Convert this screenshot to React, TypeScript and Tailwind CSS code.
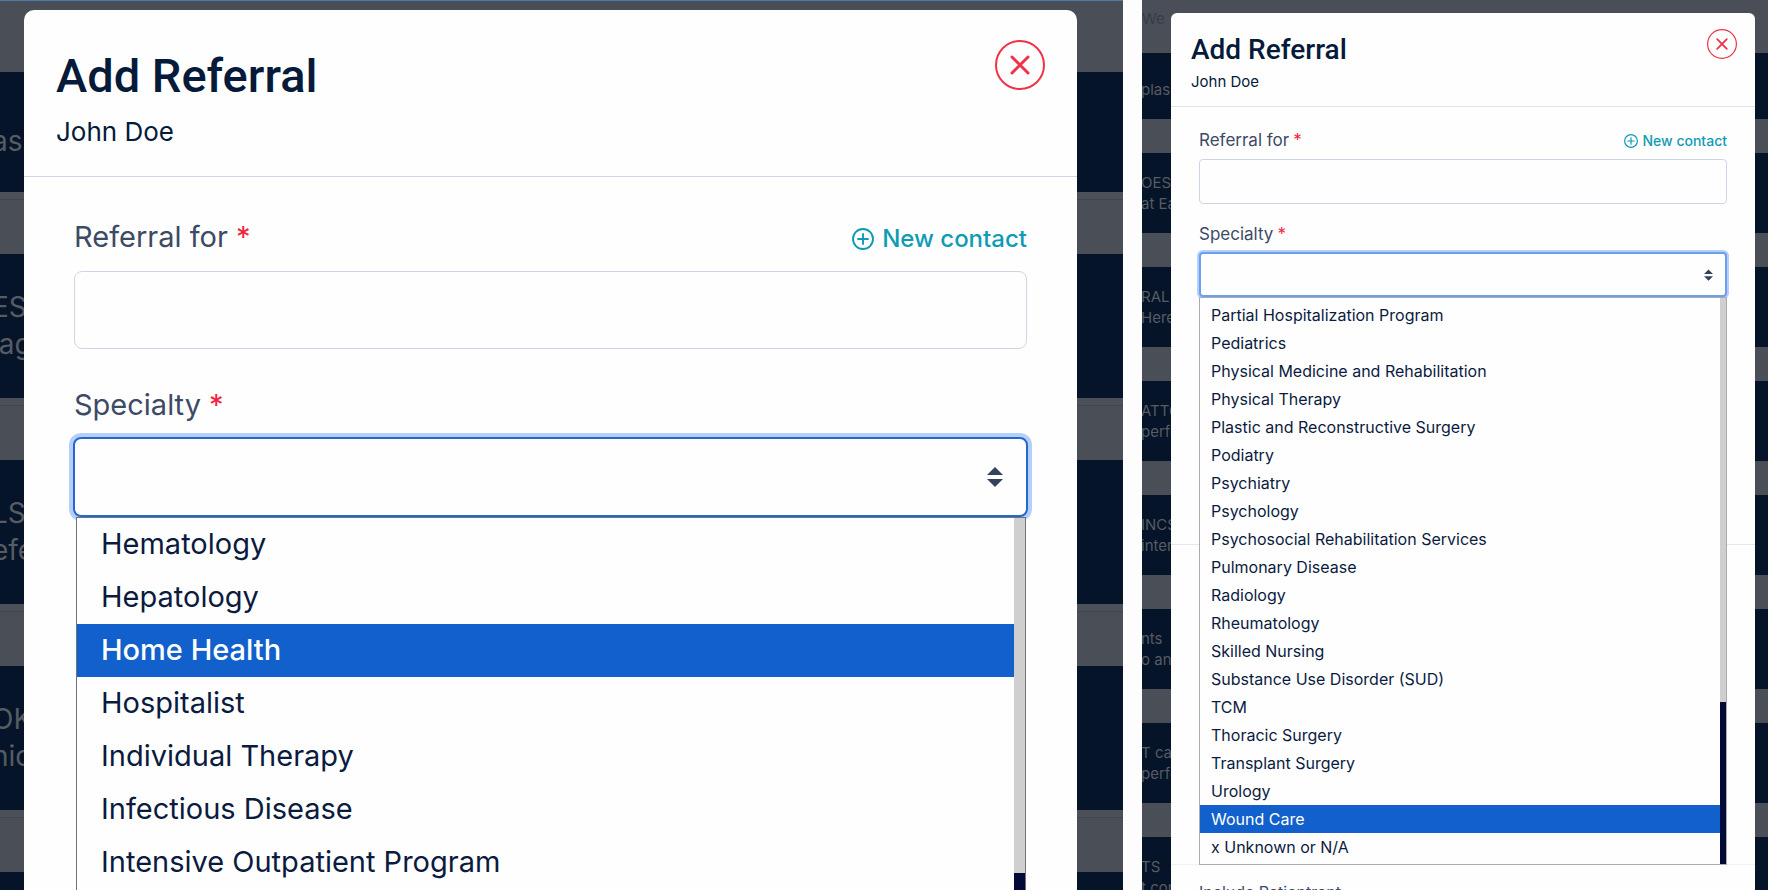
import clsx from "clsx";

type Size = "lg" | "sm";

type Stripe = {
  className: string;
  lines?: string[];
};

const leftStripes: Stripe[] = [
  { className: "h-[120px] pt-[18px]", lines: ["ass"] },
  { className: "h-[144px]", lines: ["ES", "iag"] },
  { className: "h-[144px]", lines: ["LS", "efe"] },
  { className: "h-[144px]", lines: ["OK", "hic"] },
  { className: "h-[144px]" },
];

const rightStripes: Stripe[] = [
  { className: "h-[66px] pt-[6px]", lines: ["plase"] },
  { className: "h-[80px]", lines: ["OES", "at Ea"] },
  { className: "h-[80px]", lines: ["RAL", "Here"] },
  { className: "h-[80px]", lines: ["ATT6", "perfe"] },
  { className: "h-[80px]", lines: ["INCS", "inter"] },
  { className: "h-[80px]", lines: ["nts", "o ant"] },
  { className: "h-[80px]", lines: ["T ca", "perfe"] },
  { className: "h-[80px]", lines: ["TS", "t con"] },
];

const leftOptions = [
  "Hematology",
  "Hepatology",
  "Home Health",
  "Hospitalist",
  "Individual Therapy",
  "Infectious Disease",
  "Intensive Outpatient Program",
];

const rightOptions = [
  "Partial Hospitalization Program",
  "Pediatrics",
  "Physical Medicine and Rehabilitation",
  "Physical Therapy",
  "Plastic and Reconstructive Surgery",
  "Podiatry",
  "Psychiatry",
  "Psychology",
  "Psychosocial Rehabilitation Services",
  "Pulmonary Disease",
  "Radiology",
  "Rheumatology",
  "Skilled Nursing",
  "Substance Use Disorder (SUD)",
  "TCM",
  "Thoracic Surgery",
  "Transplant Surgery",
  "Urology",
  "Wound Care",
  "x Unknown or N/A",
];

type BackdropProps = {
  size: Size;
  stripes: Stripe[];
  heading?: string;
};

function Backdrop({ size, stripes, heading }: BackdropProps) {
  const lg = size === "lg";
  return (
    <div
      aria-hidden="true"
      className={clsx(
        "absolute inset-0 flex flex-col overflow-hidden bg-[#4a4e57] text-[#565b64]",
        lg ? "text-[28px] leading-[37px]" : "text-[15px] leading-[21px]"
      )}
    >
      <div className={clsx("shrink-0 text-[#363c48]", lg ? "h-[71px]" : "h-[53px] pt-2")}>
        {heading}
      </div>
      <div className={clsx("flex flex-col", lg ? "gap-[62px]" : "gap-[34px]")}>
        {stripes.map(({ className, lines }, i) => (
          <div
            key={i}
            className={clsx(
              "flex shrink-0 flex-col justify-center bg-[#051428]",
              lg && "shadow-[0_7px_0_#4c5059,0_8px_0_#40454f]",
              className
            )}
          >
            {lines?.map((line) => (
              <p key={line} className={clsx("whitespace-nowrap", lg ? "-ml-2" : "-ml-px")}>
                {line}
              </p>
            ))}
          </div>
        ))}
      </div>
    </div>
  );
}

function CloseIcon({ size }: { size: Size }) {
  return (
    <svg
      viewBox="0 0 50 50"
      fill="none"
      stroke="currentColor"
      strokeLinecap="round"
      className={size === "lg" ? "size-[50px]" : "size-[30px]"}
    >
      <circle cx="25" cy="25" r="24" strokeWidth="2" />
      <path d="M17 17l16 16M33 17L17 33" strokeWidth="3" />
    </svg>
  );
}

function PlusIcon({ size }: { size: Size }) {
  return (
    <svg
      viewBox="0 0 22 22"
      fill="none"
      stroke="currentColor"
      strokeWidth="1.9"
      strokeLinecap="round"
      className={size === "lg" ? "size-[22px]" : "size-[14px]"}
    >
      <circle cx="11" cy="11" r="10" />
      <path d="M11 6v10M6 11h10" />
    </svg>
  );
}

function SortIcon({ size }: { size: Size }) {
  return (
    <svg
      viewBox="0 0 16 20"
      fill="currentColor"
      className={clsx(
        "pointer-events-none absolute inset-y-0 my-auto text-[#33425f]",
        size === "lg" ? "right-[25px] h-5 w-4" : "right-[14px] h-3 w-[9px]"
      )}
    >
      <path d="M8 0l8 8H0zM8 20l8-8H0z" />
    </svg>
  );
}

function Required() {
  return <span className="text-[#f0253f]">*</span>;
}

type ListProps = {
  size: Size;
  options: string[];
  active: string;
};

function OptionList({ size, options, active }: ListProps) {
  const lg = size === "lg";
  return (
    <div
      className={clsx(
        "absolute top-full z-10 flex border bg-[#fefefe]",
        lg ? "right-[2px] left-[3px] border-[#6f7277]" : "inset-x-0 border-[#a9abaf]"
      )}
    >
      <ul
        role="listbox"
        aria-label="Specialty options"
        className={clsx(
          "grow text-[#0b1b3f]",
          lg ? "pb-6 text-[29px]" : "pt-[3px] pb-[3px] text-[16px]"
        )}
      >
        {options.map((option) => (
          <li
            key={option}
            role="option"
            aria-selected={option === active}
            className={clsx(
              lg ? "h-[53px] pl-6 leading-[52px]" : "h-7 pl-[11px] leading-7",
              option === active && "bg-[#1160cb] text-white",
              option === active && lg && "font-medium"
            )}
          >
            {option}
          </li>
        ))}
      </ul>
      <div className={clsx("flex flex-col bg-[#cfcfcf]", lg ? "w-[11px]" : "w-[6px]")}>
        <div className={clsx("mt-auto bg-[#030a38]", lg ? "h-10" : "h-[162px]")} />
      </div>
    </div>
  );
}

type ModalProps = ListProps & { id: string };

function ReferralModal({ id, size, options, active }: ModalProps) {
  const lg = size === "lg";
  const label = clsx(
    "flex items-center text-[#3d4a66]",
    lg ? "gap-2 text-[29px] leading-10" : "gap-1 text-[17px] leading-6"
  );
  return (
    <section
      role="dialog"
      aria-labelledby={`${id}-title`}
      className={clsx(
        "relative grow bg-[#fefefe] text-[#061a3a]",
        lg ? "rounded-t-[10px]" : "rounded-t-md"
      )}
    >
      <header
        className={clsx(
          "flex items-start justify-between border-b",
          lg ? "border-[#cfd6e4] px-8 pt-[30px] pb-[26px]" : "border-[#dfe3ec] pt-4 pr-[18px] pb-[14px] pl-5"
        )}
      >
        <div className={lg ? "pt-2" : "pt-[5px]"}>
          <h1
            id={`${id}-title`}
            className={clsx(
              "font-['Roboto',sans-serif] font-medium",
              lg ? "text-[47px] leading-[56px]" : "text-[28px] leading-8"
            )}
          >
            Add Referral
          </h1>
          <p className={lg ? "mt-[10px] text-[26px] leading-9" : "mt-[6px] text-[15px] leading-5"}>
            John Doe
          </p>
        </div>
        <button type="button" aria-label="Close" className="text-[#ee3347]">
          <CloseIcon size={size} />
        </button>
      </header>

      <div className={lg ? "px-[50px] pt-10" : "px-7 pt-[21px] pb-[247px]"}>
        <div className="flex items-end justify-between">
          <label htmlFor={`${id}-contact`} className={label}>
            Referral for <Required />
          </label>
          <a
            href="#new-contact"
            className={clsx(
              "flex items-center font-medium text-[#109bb5]",
              lg ? "gap-2 text-[24px] leading-9" : "gap-1 text-[14px] leading-[22px]"
            )}
          >
            <PlusIcon size={size} />
            New contact
          </a>
        </div>
        <input
          id={`${id}-contact`}
          type="text"
          className={clsx(
            "block w-full border border-[#ced5e5] outline-none",
            lg ? "mt-[14px] h-[78px] rounded-lg px-6" : "mt-[7px] h-[45px] rounded-[4px] px-3"
          )}
        />
        <label htmlFor={`${id}-specialty`} className={clsx(label, lg ? "mt-9" : "mt-[18px]")}>
          Specialty <Required />
        </label>
        <div className={clsx("relative", lg ? "-mx-px mt-3" : "mt-[6px]")}>
          <select
            id={`${id}-specialty`}
            defaultValue=""
            className={clsx(
              "block w-full appearance-none bg-[#fefefe] outline-none",
              lg
                ? "h-20 rounded-lg border-2 border-[#2468cf] ring-4 ring-[#b5cffb]"
                : "h-[45px] rounded-[4px] border-2 border-[#6c9ff0] ring-2 ring-[#b5cffb]"
            )}
          >
            <option value="" />
            {options.map((option) => (
              <option key={option}>{option}</option>
            ))}
          </select>
          <SortIcon size={size} />
          <OptionList size={size} options={options} active={active} />
        </div>
      </div>

      {!lg && (
        <>
          <div className="h-80 border-t border-[#e4e7f0]" />
          <div className="border-t border-[#f1f2f6] px-7 pt-[15px]">
            <p className="text-[16px] leading-6 text-[#3d4a66]">Include Patientrant</p>
          </div>
        </>
      )}
    </section>
  );
}

export default function App() {
  return (
    <main className="grid h-screen grid-cols-[1123fr_19px_626fr] overflow-hidden bg-[#fdfdfe] font-['Inter',sans-serif]">
      <div className="relative flex overflow-hidden border-t border-[#4d7cab] pt-[9px] pr-[46px] pl-6">
        <Backdrop size="lg" stripes={leftStripes} />
        <ReferralModal id="left" size="lg" options={leftOptions} active="Home Health" />
      </div>
      <div />
      <div className="relative flex overflow-hidden pt-[13px] pr-[13px] pl-[29px]">
        <Backdrop size="sm" stripes={rightStripes} heading="We" />
        <ReferralModal id="right" size="sm" options={rightOptions} active="Wound Care" />
      </div>
    </main>
  );
}
